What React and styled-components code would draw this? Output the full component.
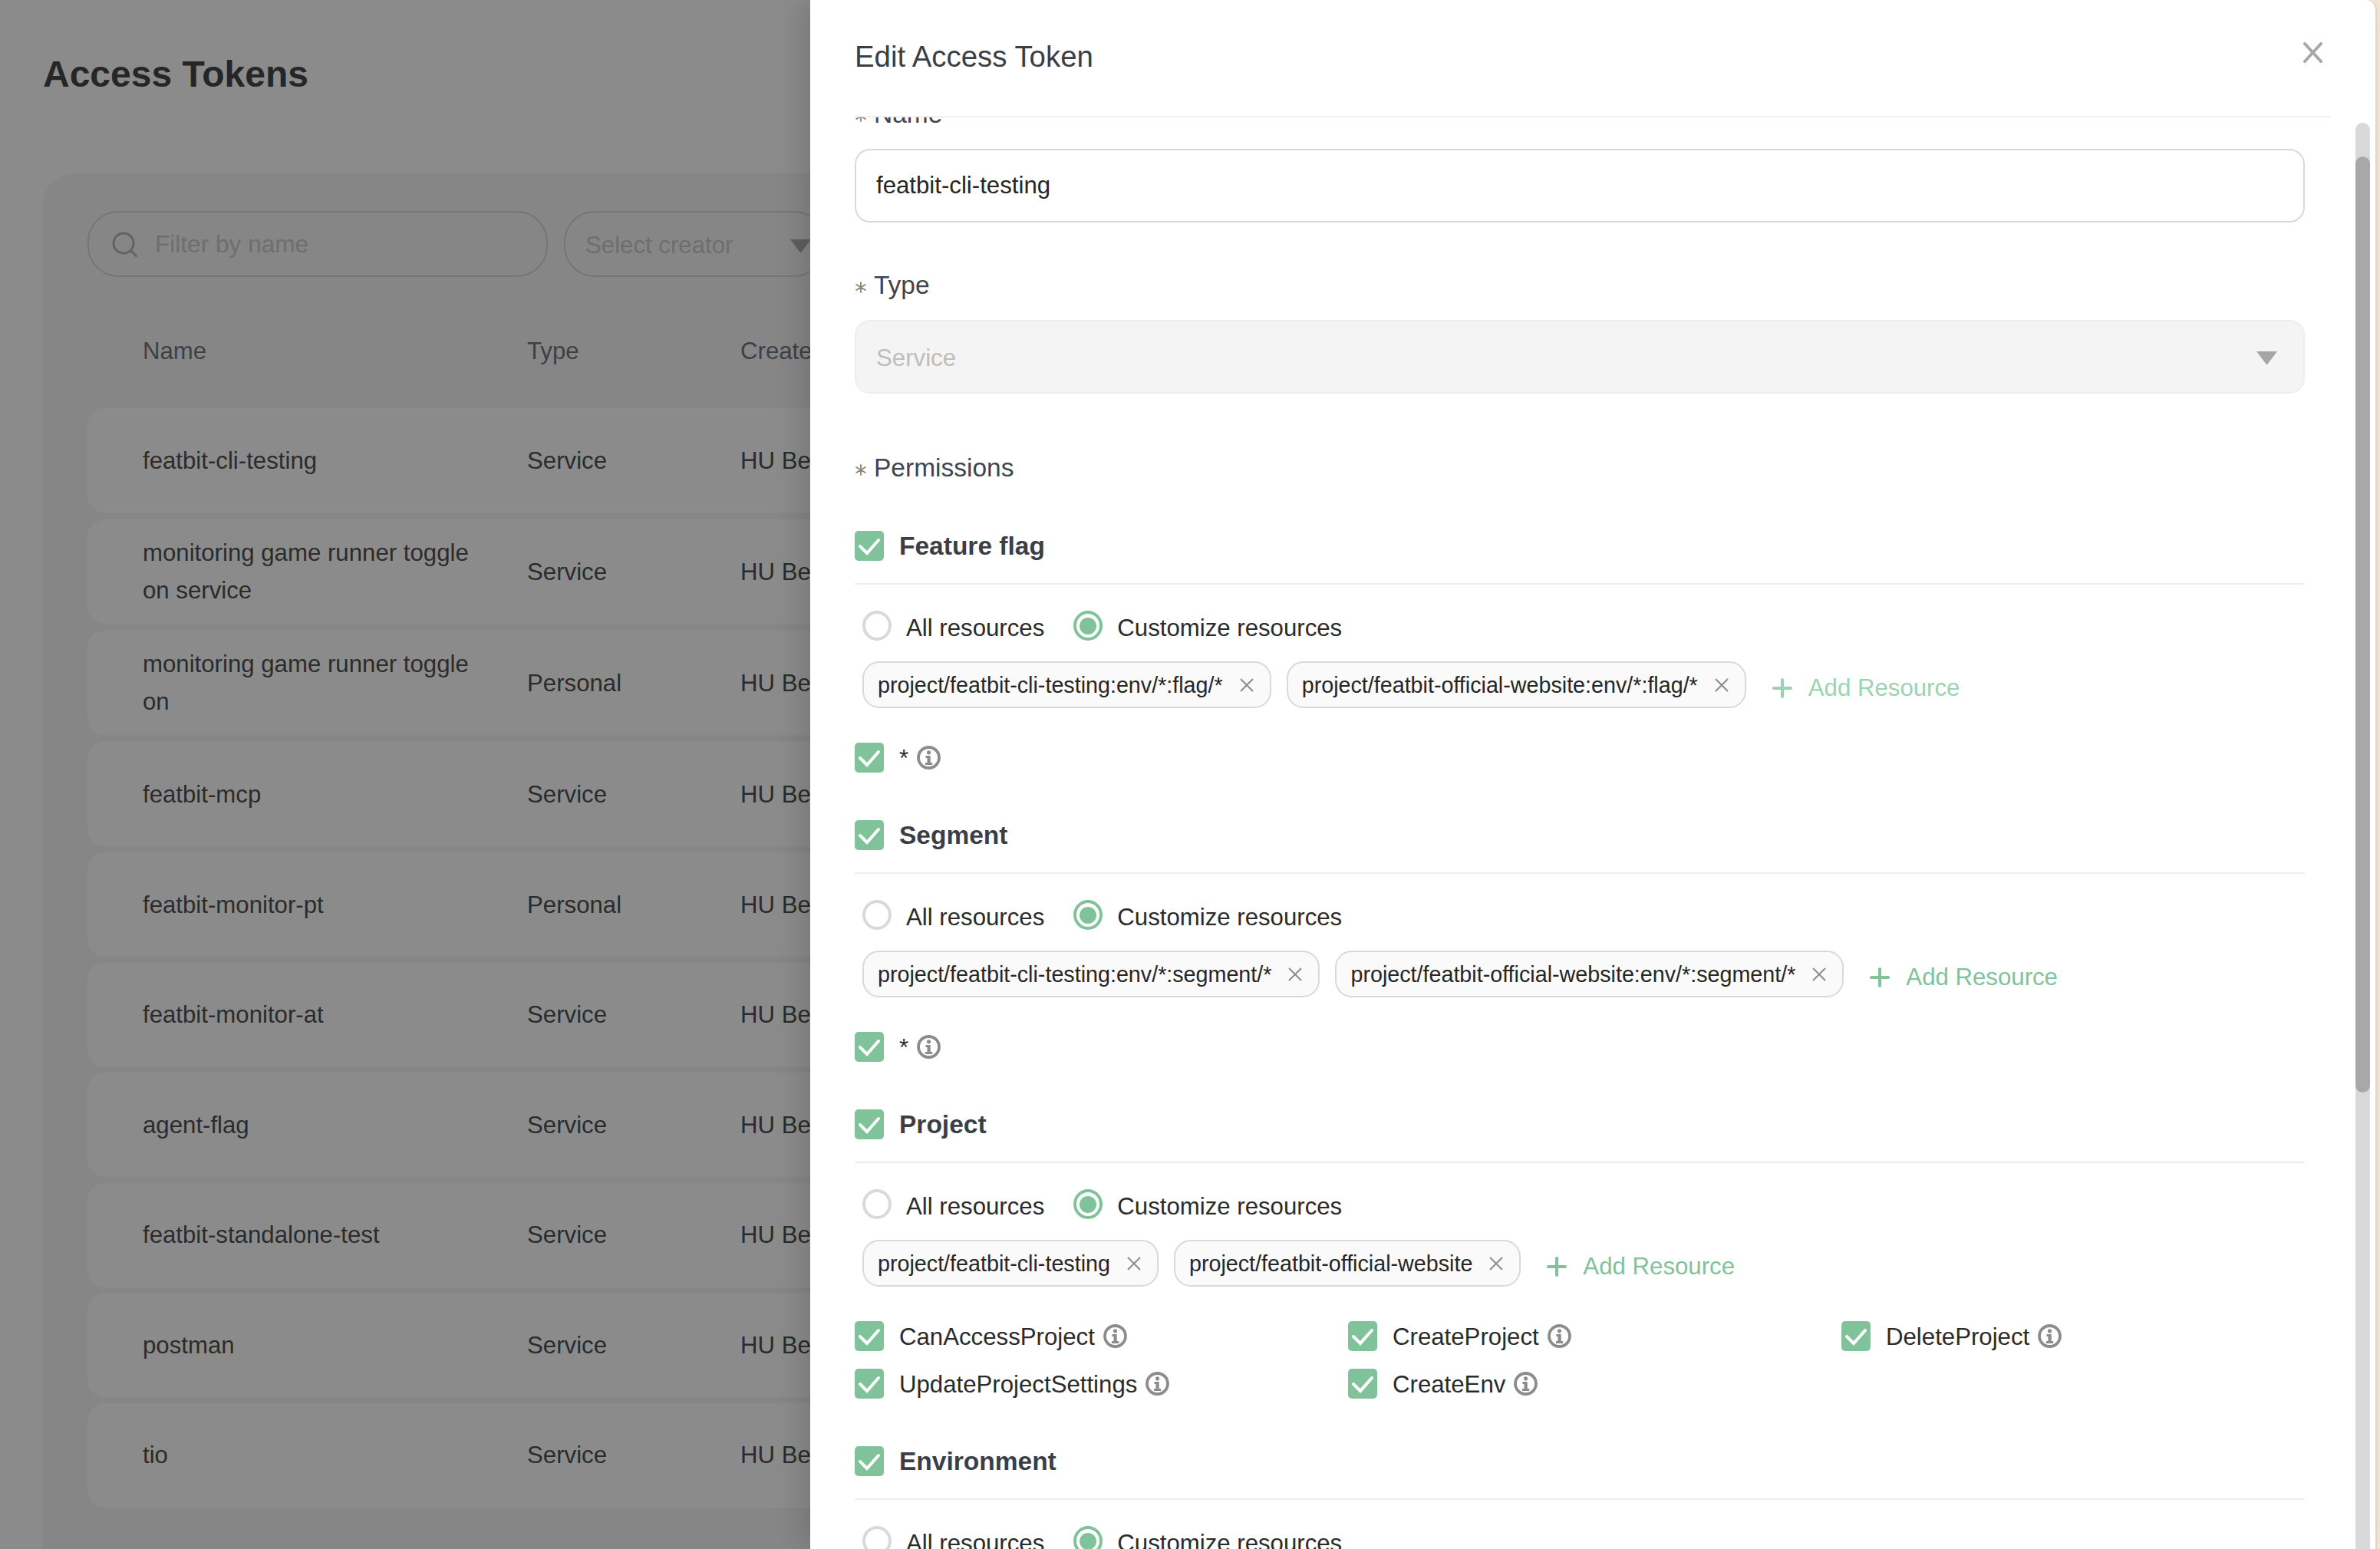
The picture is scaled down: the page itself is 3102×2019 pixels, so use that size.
import React from "react";
import styled, { createGlobalStyle } from "styled-components";

const Global = createGlobalStyle`
  html, body { margin: 0; padding: 0; width: 3102px; height: 2019px; overflow: hidden; background: #f8e8d6; }
  body { font-family: "Liberation Sans", Arial, sans-serif; }
  #root { width: 3102px; height: 2019px; }
  * { box-sizing: border-box; }
`;

const Viewport = styled.div`
  position: relative;
  width: 3102px;
  height: 2019px;
  overflow: hidden;
  background: #f8e8d6;
`;

/* Dimmed page behind the drawer */
const Page = styled.main`
  width: 2000px;
  height: 2019px;
  background: #8b8b8b;
  padding: 64px 0 0 56px;
  overflow: hidden;
`;
const PageTitle = styled.h1`
  margin: 0;
  height: 66px;
  font-size: 48px;
  line-height: 66px;
  font-weight: 700;
  color: #262626;
`;
const Card = styled.section`
  margin-top: 96px;
  height: 1900px;
  background: #868686;
  border-radius: 40px 0 0 0;
  padding: 49px 0 0 58px;
`;
const Toolbar = styled.div`
  display: flex;
  gap: 21px;
`;
const SearchBox = styled.div`
  width: 600px;
  height: 86px;
  border: 2px solid #757777;
  border-radius: 40px;
  display: flex;
  align-items: center;
  padding: 1px 0 0 29px;
  gap: 21px;
  font-size: 31.6px;
  color: #6e6e6e;
`;
const CreatorBox = styled.div`
  width: 340px;
  height: 86px;
  border: 2px solid #757777;
  border-radius: 40px;
  display: flex;
  align-items: center;
  justify-content: space-between;
  padding: 4px 16px 0 26px;
  font-size: 31.2px;
  color: #6e6e6e;
`;
const TableHead = styled.div`
  margin-top: 23px;
  height: 148px;
  display: grid;
  grid-template-columns: 501px 278px 1fr;
  align-items: center;
  padding-left: 72px;
  font-size: 31.2px;
  color: #3c4148;
`;
const Rows = styled.div`
  display: flex;
  flex-direction: column;
`;
const Row = styled.div`
  height: 136px;
  margin-bottom: ${(p) => p.$gap}px;
  background: #8b8b8b;
  border-radius: 22px 0 0 22px;
  display: grid;
  grid-template-columns: 501px 278px 1fr;
  align-items: center;
  padding-left: 72px;
  font-size: 31.2px;
  line-height: 49px;
  color: #2b2b2b;
`;
const RowName = styled.div`
  width: 450px;
`;

/* Drawer */
const Drawer = styled.aside`
  position: absolute;
  top: 0;
  right: 4px;
  bottom: 0;
  width: 2042px;
  background: #fff;
  border-right: 2px solid #dcd5cc;
  border-top-right-radius: 14px;
  box-shadow: -10px 0 36px rgba(0, 0, 0, 0.14);
  display: flex;
  flex-direction: column;
`;
const DrawerHeader = styled.header`
  flex: none;
  height: 153px;
  margin: 0 58px 0 58px;
  padding: 0 11px 4px 0;
  border-bottom: 2px solid #f0f0f0;
  display: flex;
  align-items: center;
  justify-content: space-between;
`;
const DrawerTitle = styled.h2`
  margin: 0;
  font-size: 38.4px;
  font-weight: 400;
  color: #3a3f47;
`;
const CloseButton = styled.svg`
  width: 25px;
  height: 27px;
  margin-bottom: 10px;
`;
const DrawerBody = styled.div`
  flex: 1;
  min-height: 0;
  overflow: hidden;
  padding-left: 58px;
`;
const Form = styled.form`
  width: 1890px;
  margin-top: -28px;
`;
const FieldLabel = styled.div`
  display: flex;
  align-items: center;
  gap: 10px;
  height: 48px;
  margin-top: ${(p) => p.$top || 0}px;
  margin-bottom: ${(p) => p.$bottom ?? 21}px;
  font-size: 33.5px;
  color: #3f4550;
`;
const Star = styled.svg`
  width: 14px;
  height: 15px;
  flex: none;
  margin: 4px 0 0 1px;
`;
const TextField = styled.div`
  height: 96px;
  border: 2px solid #d9d9d9;
  border-radius: 20px;
  display: flex;
  align-items: center;
  padding: 0 26px;
  font-size: 31.2px;
  color: #262626;
`;
const SelectField = styled(TextField)`
  background: #f4f4f4;
  border-color: #eeeeee;
  color: #bdbdbb;
  justify-content: space-between;
  padding: 3px 34px 0 26px;
`;
const Section = styled.section`
  margin-bottom: 62px;
`;
const SectionHead = styled.div`
  display: flex;
  align-items: flex-start;
  gap: 20px;
  height: 70px;
  padding-bottom: 29px;
  border-bottom: 2px solid #eeeeee;
  font-size: 33.5px;
  line-height: 40px;
  font-weight: 700;
  color: #3a3f47;
`;
const CheckBox = styled.span`
  flex: none;
  width: 38px;
  height: 39px;
  border-radius: 5px;
  background: #80c39a;
  display: inline-flex;
`;
const Radios = styled.div`
  display: flex;
  margin: 34px 0 20px 10px;
`;
const RadioItem = styled.div`
  display: flex;
  gap: 19px;
  margin-right: 38px;
  font-size: 31.2px;
  line-height: 46px;
  color: #2b2b2b;
`;
const RadioDot = styled.span`
  flex: none;
  width: 38px;
  height: 39px;
  border-radius: 50%;
  border: 4px solid ${(p) => (p.$on ? "#80c39a" : "#d9d9d9")};
  display: flex;
  align-items: center;
  justify-content: center;
  &::after {
    content: "";
    width: 22px;
    height: 22px;
    border-radius: 50%;
    background: ${(p) => (p.$on ? "#80c39a" : "transparent")};
  }
`;
const TagRow = styled.div`
  display: flex;
  align-items: flex-start;
  margin-left: 10px;
  gap: 20px;
`;
const Tag = styled.span`
  height: 61px;
  border: 2px solid #d9d9d9;
  border-radius: 22px;
  background: #fafafa;
  display: inline-flex;
  align-items: center;
  gap: 21px;
  padding: 2px 20px 0 18px;
  font-size: 28.7px;
  color: #262626;
  white-space: nowrap;
`;
const TagCloseIcon = styled.svg`
  margin-top: -2px;
`;
const AddButton = styled.span`
  display: inline-flex;
  align-items: center;
  gap: 21px;
  height: 53px;
  margin: 8px 0 0 14px;
  font-size: 31.2px;
  color: ${(p) => (p.$faint ? "#9bd3b0" : "#80c39a")};
  white-space: nowrap;
`;
const PermGrid = styled.div`
  margin-top: 45px;
  display: grid;
  grid-template-columns: repeat(3, 643px);
  row-gap: 23px;
`;
const Perm = styled.div`
  display: flex;
  align-items: flex-start;
  height: 39px;
  font-size: 31.2px;
  line-height: 42px;
  color: #2b2b2b;
`;
const PermName = styled.span`
  margin-left: 20px;
  margin-right: 11px;
`;
const InfoIcon = styled.svg`
  flex: none;
  width: 31px;
  height: 31px;
  margin-top: 4px;
`;
const ScrollTrack = styled.div`
  position: absolute;
  top: 160px;
  right: 7px;
  bottom: 0;
  width: 19px;
  background: #d9d9d9;
  border-radius: 10px 10px 0 0;
`;
const ScrollThumb = styled.div`
  margin-top: 44px;
  height: 1220px;
  background: #a8a8a8;
  border-radius: 10px;
`;

const Check = () => (
  <CheckBox>
    <svg width="38" height="39" viewBox="0 0 38 39" fill="none">
      <path d="M7 20l9 9 15-17" stroke="#fff" strokeWidth="4" strokeLinecap="round" strokeLinejoin="miter" />
    </svg>
  </CheckBox>
);
const Info = () => (
  <InfoIcon viewBox="0 0 31 31" fill="none">
    <circle cx="15.5" cy="15.5" r="13.5" stroke="#8c8c8c" strokeWidth="3.8" />
    <circle cx="15.5" cy="8.8" r="2.6" fill="#8c8c8c" />
    <path d="M11.5 13h6.2v9h2.5v3h-9.2v-3h2.5v-6h-2z" fill="#8c8c8c" />
  </InfoIcon>
);
const Required = () => (
  <Star viewBox="0 0 14 15" fill="none" stroke="#8f8470" strokeWidth="1.8" strokeLinecap="round">
    <path d="M7 1v13M1.2 4l11.6 7M12.8 4L1.2 11" />
  </Star>
);
const TagClose = () => (
  <TagCloseIcon width="20" height="20" viewBox="0 0 20 20" fill="none" stroke="#8c8c8c" strokeWidth="2">
    <path d="M2 2l16 16M18 2L2 18" />
  </TagCloseIcon>
);
const Plus = () => (
  <svg width="26" height="26" viewBox="0 0 26 26" fill="none" stroke="currentColor" strokeWidth="4" strokeLinecap="round">
    <path d="M2 13h22M13 2v22" />
  </svg>
);
const Arrow = ({ width, height, color }) => (
  <svg width={width} height={height} viewBox="0 0 27 17">
    <path d="M0 0h27L14.5 16.5a1.2 1.2 0 0 1-2 0z" fill={color} />
  </svg>
);

const rows = [
  ["featbit-cli-testing", "Service", 9],
  ["monitoring game runner toggle on service", "Service", 9],
  ["monitoring game runner toggle on", "Personal", 9],
  ["featbit-mcp", "Service", 8],
  ["featbit-monitor-pt", "Personal", 7.5],
  ["featbit-monitor-at", "Service", 7.5],
  ["agent-flag", "Service", 7.5],
  ["featbit-standalone-test", "Service", 7.5],
  ["postman", "Service", 7.5],
  ["tio", "Service", 0],
];

const sections = [
  {
    title: "Feature flag",
    tags: ["project/featbit-cli-testing:env/*:flag/*", "project/featbit-official-website:env/*:flag/*"],
    faint: true,
    perms: ["*"],
  },
  {
    title: "Segment",
    tags: ["project/featbit-cli-testing:env/*:segment/*", "project/featbit-official-website:env/*:segment/*"],
    perms: ["*"],
  },
  {
    title: "Project",
    tags: ["project/featbit-cli-testing", "project/featbit-official-website"],
    perms: ["CanAccessProject", "CreateProject", "DeleteProject", "UpdateProjectSettings", "CreateEnv"],
  },
  { title: "Environment", tags: [], perms: [] },
];

export default function App() {
  return (
    <Viewport>
      <Global />
      <Page>
        <PageTitle>Access Tokens</PageTitle>
        <Card>
          <Toolbar>
            <SearchBox>
              <svg width="36" height="36" viewBox="0 0 36 36" fill="none" stroke="#636363" strokeWidth="3" strokeLinecap="round">
                <circle cx="16" cy="16" r="13" />
                <path d="M25.5 25.5l7 7" />
              </svg>
              Filter by name
            </SearchBox>
            <CreatorBox>
              Select creator
              <Arrow width={27} height={17} color="#5f5f5f" />
            </CreatorBox>
          </Toolbar>
          <TableHead>
            <span>Name</span>
            <span>Type</span>
            <span>Create</span>
          </TableHead>
          <Rows>
            {rows.map(([name, type, gap]) => (
              <Row key={name} $gap={gap}>
                <RowName>{name}</RowName>
                <span>{type}</span>
                <span>HU Be</span>
              </Row>
            ))}
          </Rows>
        </Card>
      </Page>
      <Drawer>
        <DrawerHeader>
          <DrawerTitle>Edit Access Token</DrawerTitle>
          <CloseButton viewBox="0 0 25 27" fill="none" stroke="#a8a8a8" strokeWidth="4" strokeLinecap="round">
            <path d="M2 2l21 23M23 2L2 25" />
          </CloseButton>
        </DrawerHeader>
        <DrawerBody>
          <Form>
            <FieldLabel>
              <Required />
              Name
            </FieldLabel>
            <TextField>featbit-cli-testing</TextField>
            <FieldLabel $top={58}>
              <Required />
              Type
            </FieldLabel>
            <SelectField>
              Service
              <Arrow width={27} height={17} color="#a6a6a6" />
            </SelectField>
            <FieldLabel $top={73} $bottom={58}>
              <Required />
              Permissions
            </FieldLabel>
            {sections.map((s) => (
              <Section key={s.title}>
                <SectionHead>
                  <Check />
                  {s.title}
                </SectionHead>
                <Radios>
                  <RadioItem>
                    <RadioDot />
                    All resources
                  </RadioItem>
                  <RadioItem>
                    <RadioDot $on />
                    Customize resources
                  </RadioItem>
                </Radios>
                {s.tags.length > 0 && (
                  <TagRow>
                    {s.tags.map((t) => (
                      <Tag key={t}>
                        {t}
                        <TagClose />
                      </Tag>
                    ))}
                    <AddButton $faint={s.faint}>
                      <Plus />
                      Add Resource
                    </AddButton>
                  </TagRow>
                )}
                {s.perms.length > 0 && (
                  <PermGrid>
                    {s.perms.map((p) => (
                      <Perm key={p}>
                        <Check />
                        <PermName>{p}</PermName>
                        <Info />
                      </Perm>
                    ))}
                  </PermGrid>
                )}
              </Section>
            ))}
          </Form>
        </DrawerBody>
        <ScrollTrack>
          <ScrollThumb />
        </ScrollTrack>
      </Drawer>
    </Viewport>
  );
}
